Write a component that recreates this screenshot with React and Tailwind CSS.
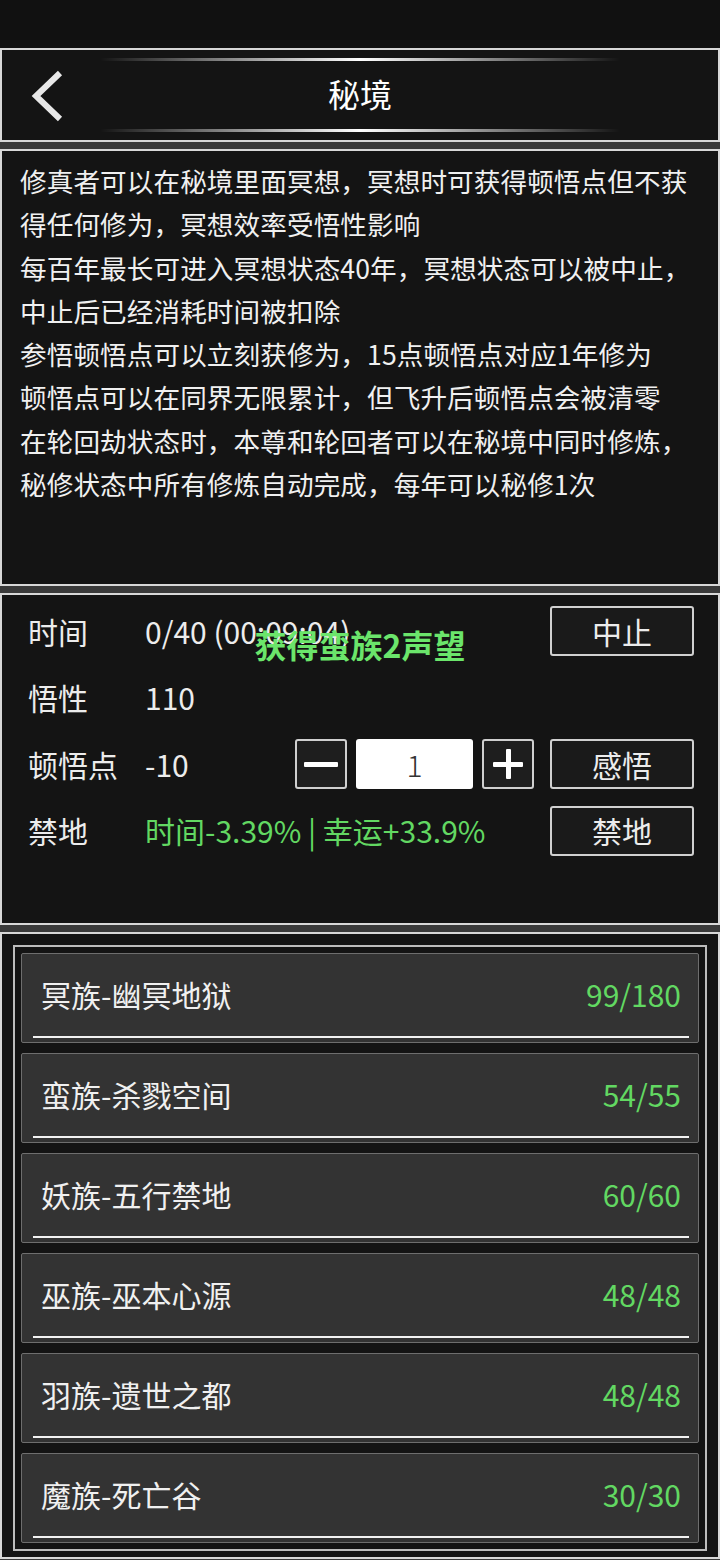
import { useState } from 'react'

// 秘境 screen: header, rules text, meditation controls, forbidden-land list.

const FONT = { fontFamily: '"Noto Sans CJK SC", "Noto Sans", sans-serif' }

const RULES = [
  '修真者可以在秘境里面冥想，冥想时可获得顿悟点但不获',
  '得任何修为，冥想效率受悟性影响',
  '每百年最长可进入冥想状态40年，冥想状态可以被中止，',
  '中止后已经消耗时间被扣除',
  '参悟顿悟点可以立刻获修为，15点顿悟点对应1年修为',
  '顿悟点可以在同界无限累计，但飞升后顿悟点会被清零',
  '在轮回劫状态时，本尊和轮回者可以在秘境中同时修炼，',
  '秘修状态中所有修炼自动完成，每年可以秘修1次',
]

const LANDS = [
  { name: '冥族-幽冥地狱', progress: '99/180' },
  { name: '蛮族-杀戮空间', progress: '54/55' },
  { name: '妖族-五行禁地', progress: '60/60' },
  { name: '巫族-巫本心源', progress: '48/48' },
  { name: '羽族-遗世之都', progress: '48/48' },
  { name: '魔族-死亡谷', progress: '30/30' },
]

function GlowLine() {
  return (
    <div className="mx-auto h-[3px] w-[520px] bg-gradient-to-r from-transparent via-white to-transparent" />
  )
}

function ActionButton({ children }) {
  return (
    <button className="flex h-[50px] w-[144px] items-center justify-center rounded-[3px] border-2 border-[#d0d0d0] bg-[#1a1a1a] text-[30px] text-[#ececec]">
      {children}
    </button>
  )
}

function StepButton({ children, onClick }) {
  return (
    <button
      onClick={onClick}
      className="flex h-[50px] w-[52px] items-center justify-center rounded-[3px] border-2 border-[#cfcfcf] bg-[#1e1e1e] text-white"
    >
      {children}
    </button>
  )
}

export default function App() {
  const [count, setCount] = useState(1)

  return (
    <div className="min-h-[1560px] w-[720px] bg-[#3a3a3a] text-[#ececec]" style={FONT}>
      <div className="h-[48px] bg-[#111111]" />

      <div className="flex flex-col gap-[7px]">
        {/* header */}
        <header className="relative h-[94px] border-2 border-[#d8d8d8] bg-[#141414]">
          <div className="flex h-full flex-col justify-between py-[8px]">
            <GlowLine />
            <GlowLine />
          </div>
          <svg className="absolute left-[26px] top-[20px]" width="40" height="52" viewBox="0 0 40 52" fill="none">
            <polyline points="32,3 8,26 32,49" stroke="#e8e8e8" strokeWidth="6" strokeLinejoin="miter" />
          </svg>
          <h1 className="absolute inset-x-0 top-0 flex h-[86px] items-center justify-center text-[32px] text-white">秘境</h1>
        </header>

        {/* rules */}
        <section className="h-[437px] border-2 border-[#d8d8d8] bg-[#141414] pl-[18px] pt-[8px]">
          {RULES.map((line) => (
            <p key={line} className="whitespace-nowrap text-[26.6px] leading-[43.3px] tracking-[0.1px] text-[#f0f0f0]">
              {line}
            </p>
          ))}
        </section>

        {/* meditation controls */}
        <section className="relative h-[332px] border-2 border-[#d8d8d8] bg-[#141414] pl-[26px] pr-[24px] pt-[11px]">
          <div className="flex flex-col gap-[16.5px] text-[30px]">
            <div className="flex h-[50px] items-center">
              <span className="w-[117px]">时间</span>
              <span className="flex-1">0/40 (00:09:04)</span>
              <ActionButton>中止</ActionButton>
            </div>
            <div className="flex h-[50px] items-center">
              <span className="w-[117px]">悟性</span>
              <span className="flex-1">110</span>
            </div>
            <div className="flex h-[50px] items-center">
              <span className="w-[117px]">顿悟点</span>
              <span className="flex-1">-10</span>
              <div className="mr-[16px] flex items-center gap-[9px]">
                <StepButton onClick={() => setCount((c) => Math.max(1, c - 1))}>
                  <span className="block h-[5px] w-[34px] rounded-[1px] bg-white" />
                </StepButton>
                <div className="flex h-[50px] w-[117px] items-center justify-center rounded-[3px] bg-white text-[30px] font-light text-[#333333]">
                  {count}
                </div>
                <StepButton onClick={() => setCount((c) => c + 1)}>
                  <span className="relative block h-[30px] w-[30px]">
                    <span className="absolute left-0 top-[12.5px] h-[5px] w-[30px] rounded-[1px] bg-white" />
                    <span className="absolute left-[12.5px] top-0 h-[30px] w-[5px] rounded-[1px] bg-white" />
                  </span>
                </StepButton>
              </div>
              <ActionButton>感悟</ActionButton>
            </div>
            <div className="flex h-[50px] items-center">
              <span className="w-[117px]">禁地</span>
              <span className="flex-1 text-[#62d862]">时间-3.39% | 幸运+33.9%</span>
              <ActionButton>禁地</ActionButton>
            </div>
          </div>

          <div className="pointer-events-none absolute left-0 right-0 top-[25px] text-center text-[32px] font-bold text-[#6be56b]">
            获得蛮族2声望
          </div>
        </section>

        {/* forbidden lands */}
        <section className="h-[627px] border-2 border-[#d8d8d8] bg-[#141414] px-[11px] pt-[11px]">
          <div className="flex flex-col gap-[10px] border-2 border-[#bdbdbd] px-[6px] py-[6px]">
            {LANDS.map((land) => (
              <div
                key={land.name}
                className="relative h-[90px] rounded-[2px] border border-[#6e6e6e] bg-[#333333]"
              >
                <div className="flex h-[80px] items-center justify-between pl-[19px] pr-[17px] text-[30px]">
                  <span className="text-[#f0f0f0]">{land.name}</span>
                  <span className="text-[#62d862]">{land.progress}</span>
                </div>
                <div className="absolute bottom-[4px] left-[11px] right-[9px] h-[2px] bg-[#f2f2f2]" />
              </div>
            ))}
          </div>
        </section>
      </div>
    </div>
  )
}
